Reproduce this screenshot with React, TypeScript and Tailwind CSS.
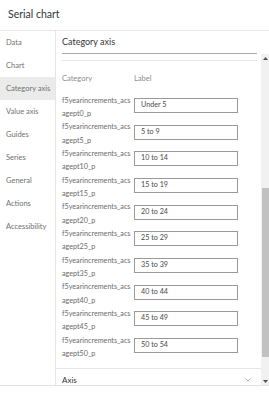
import React from 'react';

const navItems = ['Data', 'Chart', 'Category axis', 'Value axis', 'Guides', 'Series', 'General', 'Actions', 'Accessibility'];

const rows = [
  { field: 'agept0_p', label: 'Under 5' },
  { field: 'agept5_p', label: '5 to 9' },
  { field: 'agept10_p', label: '10 to 14' },
  { field: 'agept15_p', label: '15 to 19' },
  { field: 'agept20_p', label: '20 to 24' },
  { field: 'agept25_p', label: '25 to 29' },
  { field: 'agept35_p', label: '35 to 39' },
  { field: 'agept40_p', label: '40 to 44' },
  { field: 'agept45_p', label: '45 to 49' },
  { field: 'agept50_p', label: '50 to 54' },
];

export default function App() {
  return (
    <div className="w-[269px] h-[400px] bg-white font-['Lato',sans-serif] overflow-hidden">
      <div className="h-[386px] flex flex-col border-b border-[#e3e3e3]">
        {/* Header */}
        <div className="h-[31px] shrink-0 flex items-center px-[8px] border-b border-[#e6e6e6]">
          <span className="text-[10.5px] text-[#353535]">Serial chart</span>
        </div>

        <div className="flex flex-1 min-h-0">
          {/* Sidebar */}
          <div className="w-[56px] shrink-0 border-r border-[#e6e6e6]">
            {navItems.map((item) => (
              <div
                key={item}
                className={
                  'h-[23px] flex items-center pl-[6px] text-[7.5px] text-[#707070] whitespace-nowrap ' +
                  (item === 'Category axis' ? 'bg-[#ebebeb] text-[#555]' : '')
                }
              >
                {item}
              </div>
            ))}
          </div>

          {/* Main */}
          <div className="flex-1 min-w-0 flex flex-col">
            <div className="h-[23px] shrink-0 ml-[6px] mr-[12px] flex items-center border-b border-[#a9a9a9]">
              <span className="text-[9px] text-[#353535]">Category axis</span>
            </div>

            <div className="flex flex-1 min-h-0">
              <div className="flex-1 min-w-0 overflow-hidden">
                <div className="ml-[6px] mr-[4px] mt-[6px] border-t border-[#e6e6e6]" />
                <div className="flex pl-[6px] mt-[11px] text-[7.5px] text-[#8c8c8c] leading-[13px]">
                  <span className="w-[72px]">Category</span>
                  <span>Label</span>
                </div>
                <div className="mt-[7px]">
                  {rows.map((r) => (
                    <div key={r.field} className="h-[26.7px] flex items-center pl-[6px]">
                      <div className="w-[72px] pt-[3px] text-[7.2px] leading-[13.3px] text-[#6b6b6b]">
                        <div className="whitespace-nowrap">f5yearincrements_acs</div>
                        <div>{r.field}</div>
                      </div>
                      <div className="w-[104px] h-[15px] border border-[#9a9a9a] flex items-center px-[6px] text-[7.2px] text-[#4a4a4a] bg-white">
                        {r.label}
                      </div>
                    </div>
                  ))}
                </div>
                <div className="mt-[9px] border-t border-[#e6e6e6] pt-[6px] pl-[6px] pr-[10px] flex items-center justify-between leading-[10px]">
                  <span className="text-[8px] text-[#353535]">Axis</span>
                  <svg width="6" height="4" viewBox="0 0 6 4" className="mt-[1px]">
                    <path d="M0.5 0.5 L3 3 L5.5 0.5" fill="none" stroke="#9a9a9a" strokeWidth="0.8" />
                  </svg>
                </div>
              </div>

              {/* Scrollbar */}
              <div className="w-[8px] shrink-0 bg-[#f1f1f1] flex flex-col items-center">
                <div className="h-[8px] flex items-center justify-center">
                  <svg width="5" height="3" viewBox="0 0 5 3">
                    <path d="M0 3 L2.5 0 L5 3 Z" fill="#505050" />
                  </svg>
                </div>
                <div className="h-[126px]" />
                <div className="w-[7px] h-[169px] bg-[#c1c1c1]" />
                <div className="flex-1" />
                <div className="h-[8px] flex items-center justify-center">
                  <svg width="5" height="3" viewBox="0 0 5 3">
                    <path d="M0 0 L5 0 L2.5 3 Z" fill="#505050" />
                  </svg>
                </div>
              </div>
            </div>
          </div>
        </div>
      </div>
    </div>
  );
}
